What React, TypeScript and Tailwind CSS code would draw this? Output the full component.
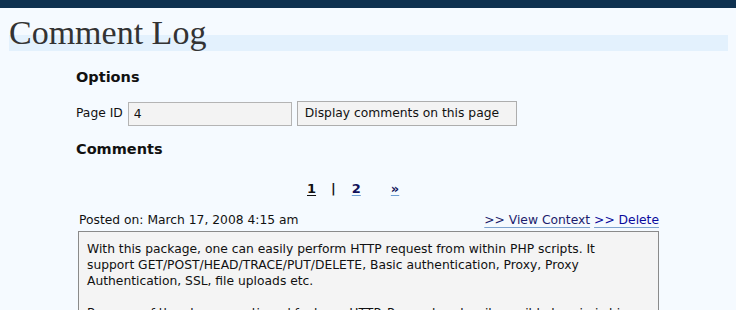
import React from 'react';

const bodyFont = { fontFamily: '"DejaVu Sans", Verdana, sans-serif' };

const CommentBox: React.FC<{ lines: string[] }> = ({ lines }) => (
  <div className="mt-[3px] border border-[#8a8a8a] bg-[#f4f4f4] pl-[8px] pr-2 pt-[9px] pb-3 text-[12.3px] leading-[16px] text-[#111] whitespace-nowrap">
    {lines.map((line, i) => (
      <div key={i} className="h-[16px]">
        {line}
      </div>
    ))}
  </div>
);

export default function App() {
  const comment = [
    'With this package, one can easily perform HTTP request from within PHP scripts. It',
    'support GET/POST/HEAD/TRACE/PUT/DELETE, Basic authentication, Proxy, Proxy',
    'Authentication, SSL, file uploads etc.',
    '',
    'Because of the above mentioned features HTTP_Request makes it possible to mimic big',
  ];

  return (
    <div className="h-[310px] w-[736px] overflow-hidden bg-[#f5faff]" style={bodyFont}>
      {/* top bar */}
      <div className="h-2 bg-[#0e3150]" />

      {/* title with the pale band behind it */}
      <h1
        className="ml-[9px] mr-[8px] mt-2 h-[35px] text-[34px] leading-[34px] text-[#333] bg-[linear-gradient(to_bottom,transparent_19px,#e3f1fd_19px,#e3f1fd_35px,transparent_35px)]"
        style={{ fontFamily: '"Liberation Serif", "Times New Roman", serif' }}
      >
        Comment Log
      </h1>

      <div className="ml-[76px] w-[583px] text-[#111]">
        <h2 className="mt-[18px] text-[14.5px] font-bold leading-[17px]">Options</h2>

        <div className="mt-[15px] flex items-start text-[12.3px]">
          <span className="mt-[4px] leading-[16px]">Page ID</span>
          <input
            readOnly
            value="4"
            className="ml-[5px] mt-[1px] h-[24px] w-[164px] border border-[#b4b4b4] bg-[#f3f3f3] px-[5px] text-[12.3px] text-[#111] outline-none"
            style={bodyFont}
          />
          <button
            type="button"
            className="ml-[5px] h-[25px] w-[220px] border border-[#adadad] bg-[#f3f3f3] px-[7px] text-left text-[12.3px] text-[#111]"
            style={bodyFont}
          >
            Display comments on this page
          </button>
        </div>

        <h2 className="mt-[15px] text-[14.5px] font-bold leading-[17px]">Comments</h2>

        <div className="mt-[23px] flex h-[16px] text-[13px] font-bold leading-[16px]">
          <span className="ml-[231px] underline decoration-[#111] underline-offset-[2px]">1</span>
          <span className="ml-[15px]">|</span>
          <a href="#" className="ml-[16px] text-[#12125a] underline decoration-[#6e9fd3] underline-offset-[2px]">
            2
          </a>
          <a href="#" className="ml-[30px] text-[#12125a] underline decoration-[#6e9fd3] underline-offset-[2px]">
            »
          </a>
        </div>

        <div className="mt-[15px] flex h-[16px] items-start text-[12.3px] leading-[16px]">
          <span className="ml-[3px]">Posted on: March 17, 2008 4:15 am</span>
          <span className="ml-auto flex gap-[4px]">
            <a href="#" className="text-[#1c1c6c] underline decoration-[#7ea3cf] underline-offset-[3px]">
              &gt;&gt; View Context
            </a>
            <a href="#" className="text-[#0a0a9c] underline decoration-[#7ea3cf] underline-offset-[3px]">
              &gt;&gt; Delete
            </a>
          </span>
        </div>

        <div className="ml-[2px]">
          <CommentBox lines={comment} />
        </div>
      </div>
    </div>
  );
}
